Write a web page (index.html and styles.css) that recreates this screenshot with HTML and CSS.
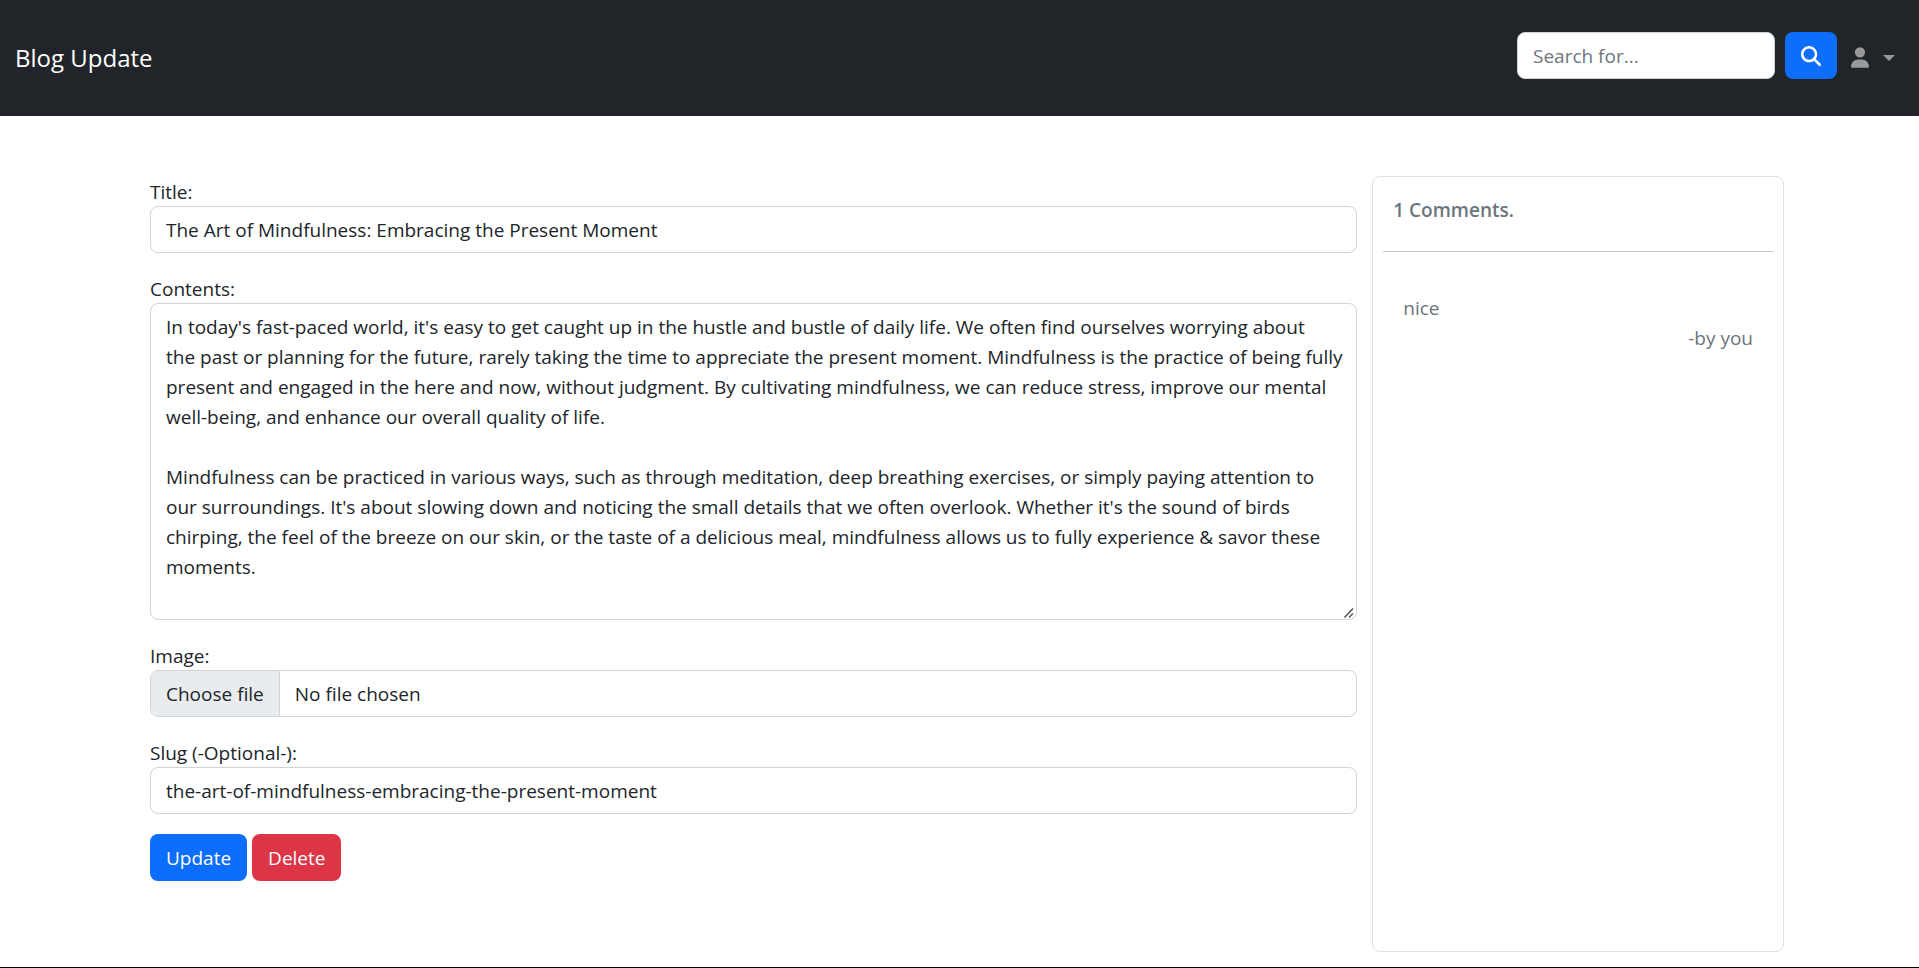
FILE: index.html
```html
<!DOCTYPE html>
<html lang="en">
<head>
<meta charset="utf-8">
<meta name="viewport" content="width=device-width, initial-scale=1">
<title>Blog Update</title>
<link rel="stylesheet" href="styles.css">
</head>
<body>
<header class="navbar">
  <a class="brand" href="#">Blog Update</a>
  <div class="nav-tools">
    <form class="search" role="search">
      <input class="control search-input" type="search" placeholder="Search for..." aria-label="Search for">
      <button class="btn btn-primary btn-icon" type="button" aria-label="Search">
        <svg class="icon-search" viewBox="0 0 512 512" fill="currentColor" aria-hidden="true"><path d="M416 208c0 45.9-14.9 88.3-40 122.7L502.6 457.4c12.5 12.5 12.5 32.8 0 45.3s-32.8 12.5-45.3 0L330.7 376c-34.4 25.2-76.8 40-122.7 40C93.1 416 0 322.9 0 208S93.1 0 208 0S416 93.1 416 208zM208 352a144 144 0 1 0 0-288 144 144 0 1 0 0 288z"/></svg>
      </button>
    </form>
    <button class="user-menu" type="button" aria-label="Account" aria-haspopup="true">
      <svg class="icon-user" viewBox="0 0 448 512" fill="currentColor" aria-hidden="true"><path d="M224 256A128 128 0 1 0 224 0a128 128 0 1 0 0 256zm-45.7 48C79.8 304 0 383.8 0 482.3C0 498.7 13.3 512 29.7 512H418.3c16.4 0 29.7-13.3 29.7-29.7C448 383.8 368.2 304 269.7 304H178.3z"/></svg>
      <span class="caret"></span>
    </button>
  </div>
</header>
<main class="container">
  <form class="editor">
    <div class="field">
      <label for="title">Title:</label>
      <input class="control" id="title" type="text" value="The Art of Mindfulness: Embracing the Present Moment">
    </div>
    <div class="field">
      <label for="contents">Contents:</label>
      <textarea class="control" id="contents" rows="10">In today's fast-paced world, it's easy to get caught up in the hustle and bustle of daily life. We often find ourselves worrying about
the past or planning for the future, rarely taking the time to appreciate the present moment. Mindfulness is the practice of being fully present and engaged in the here and now, without judgment. By cultivating mindfulness, we can reduce stress, improve our mental well-being, and enhance our overall quality of life.

Mindfulness can be practiced in various ways, such as through meditation, deep breathing exercises, or simply paying attention to our surroundings. It's about slowing down and noticing the small details that we often overlook. Whether it's the sound of birds chirping, the feel of the breeze on our skin, or the taste of a delicious meal, mindfulness allows us to fully experience &amp; savor these moments.</textarea>
    </div>
    <div class="field">
      <label for="image">Image:</label>
      <div class="file">
        <input class="file-input" id="image" type="file">
        <span class="file-button">Choose file</span>
        <span class="file-name">No file chosen</span>
      </div>
    </div>
    <div class="field">
      <label for="slug">Slug (-Optional-):</label>
      <input class="control" id="slug" type="text" value="the-art-of-mindfulness-embracing-the-present-moment">
    </div>
    <div class="actions">
      <button class="btn btn-primary" type="button">Update</button>
      <button class="btn btn-danger" type="button">Delete</button>
    </div>
  </form>
  <aside class="comments">
    <h2 class="comments-title">1 Comments.</h2>
    <hr class="divider">
    <div class="comment">
      <p class="comment-text">nice</p>
      <p class="comment-author">-by you</p>
    </div>
  </aside>
</main>
<footer class="footer"></footer>
</body>
</html>
```
FILE: styles.css
```css
*, *::before, *::after { box-sizing: border-box; }

body {
  display: flex;
  flex-direction: column;
  min-height: 100vh;
  margin: 0;
  color: #212529;
  background: #fff;
  font: 19px/30px "Open Sans", "Segoe UI", sans-serif;
}

input, textarea, button { font: inherit; }

.navbar {
  display: flex;
  align-items: center;
  justify-content: space-between;
  padding: 32px 24px 32px 15px;
  background: #212529;
}

.brand {
  color: #fff;
  font-size: 24px;
  text-decoration: none;
}

.nav-tools {
  display: flex;
  align-items: center;
  gap: 14px;
  margin-bottom: 5px;
}

.search { display: flex; gap: 10px; }
.search-input { width: 258px; }

.control {
  display: block;
  padding: 8px 15px 7px;
  color: #212529;
  background: #fff;
  border: 1px solid #ced4da;
  border-radius: 8px;
  appearance: none;
}
.control::placeholder { color: #6c757d; opacity: 1; }

.btn {
  padding: 9px 16px 7px;
  color: #fff;
  line-height: 31px;
  border: 0;
  border-radius: 8px;
  cursor: pointer;
}
.btn-primary { background: #0d6efd; }
.btn-danger { background: #dc3545; }
.btn-icon { display: flex; align-items: center; padding: 8px 16px; }

.icon-search { width: 20px; height: 20px; }
.icon-user { width: 18px; height: 21px; }

.user-menu {
  display: flex;
  align-items: center;
  gap: 14px;
  padding: 4px 0 0;
  color: #98999b;
  background: none;
  border: 0;
  cursor: pointer;
}

.caret {
  border: 6px solid transparent;
  border-top-color: currentColor;
  border-bottom: 0;
}

.container {
  display: grid;
  flex: 1;
  grid-template-columns: minmax(0, 1208fr) minmax(0, 412fr);
  gap: 15px;
  width: 100%;
  max-width: 1649px;
  margin: 0 auto;
  padding: 60px 0 15px 15px;
}

.field { margin-bottom: 20px; }
.field label {
  display: block;
  padding-top: 2px;
  line-height: 28px;
}
.field .control { width: 100%; }

textarea.control {
  padding-right: 8px;
  resize: vertical;
}
textarea.control::-webkit-resizer {
  background: url("data:image/svg+xml,%3Csvg xmlns='http://www.w3.org/2000/svg' width='15' height='15' viewBox='0 0 15 15'%3E%3Cpath d='M3.500 13.500L12 4.500M8 13.500L12 9.500' stroke='%23555' stroke-width='1.500'/%3E%3C/svg%3E") no-repeat right bottom;
}

.file {
  position: relative;
  display: flex;
  overflow: hidden;
  border: 1px solid #ced4da;
  border-radius: 8px;
}
.file-input {
  position: absolute;
  inset: 0;
  width: 100%;
  opacity: 0;
  cursor: pointer;
}
.file-button, .file-name { padding: 8px 15px 7px; }
.file-button {
  background: #e9ecef;
  border-right: 1px solid #ced4da;
}

.actions { display: flex; gap: 5px; }

.comments {
  padding: 18px 10px;
  color: #6c757d;
  border: 1px solid #dee2e6;
  border-radius: 8px;
}
.comments-title {
  margin: 0 10px;
  font-size: 19px;
  font-weight: 600;
}
.divider {
  height: 1px;
  margin: 26px 0 41px;
  background: #c8c9ca;
  border: 0;
}
.comment { padding: 0 20px; }
.comment p { margin: 0; }
.comment-author { text-align: right; }

.footer { height: 1px; background: #000; }
```
